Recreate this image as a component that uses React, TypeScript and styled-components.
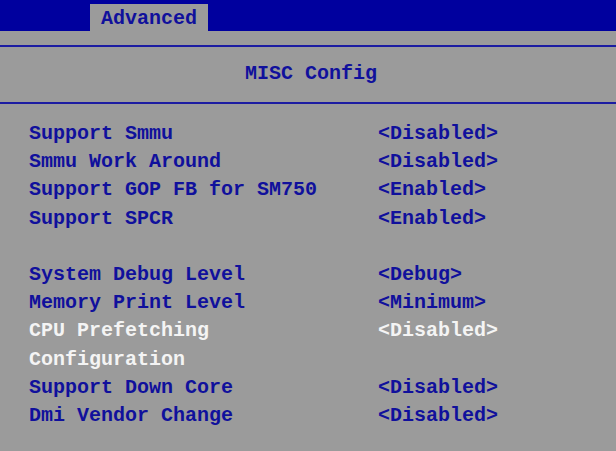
import styled, { createGlobalStyle } from 'styled-components';

const GlobalStyle = createGlobalStyle`
  html, body {
    margin: 0;
    padding: 0;
    background: #9b9b9b;
  }
  body {
    font-family: "Liberation Mono", "DejaVu Sans Mono", monospace;
    font-weight: bold;
    font-size: 20px;
  }
`;

const Screen = styled.div`
  width: 616px;
  height: 451px;
  overflow: hidden;
  background: #9b9b9b;
  display: flex;
  flex-direction: column;
`;

const TopBar = styled.header`
  height: 31px;
  background: #00009e;
  display: flex;
  align-items: flex-end;
  padding-left: 90px;
`;

const Tab = styled.div`
  height: 27px;
  width: 95px;
  padding: 0 12px 0 11px;
  background: #9b9b9b;
  color: #10109c;
  line-height: 29px;
`;

const TitleBar = styled.div`
  margin-top: 14px;
  height: 55px;
  border-top: 2px solid #1c1ca2;
  border-bottom: 2px solid #1c1ca2;
  text-align: center;
  padding-left: 6px;
  line-height: 53px;
  color: #10109c;
`;

const List = styled.div`
  padding: 16px 0 0 29px;
  display: flex;
  flex-direction: column;
`;

const Row = styled.div<{ selected?: boolean }>`
  display: grid;
  grid-template-columns: 349px auto;
  height: 28.2px;
  line-height: 28.2px;
  white-space: pre;
  color: ${props => (props.selected ? '#f4f4f4' : '#10109c')};
`;

const Spacer = styled.div`
  height: 28.2px;
`;

const Value = styled.span``;

type Item = { label: string; value?: string; selected?: boolean } | null;

const items: Item[] = [
  { label: 'Support Smmu', value: '<Disabled>' },
  { label: 'Smmu Work Around', value: '<Disabled>' },
  { label: 'Support GOP FB for SM750', value: '<Enabled>' },
  { label: 'Support SPCR', value: '<Enabled>' },
  null,
  { label: 'System Debug Level', value: '<Debug>' },
  { label: 'Memory Print Level', value: '<Minimum>' },
  { label: 'CPU Prefetching', value: '<Disabled>', selected: true },
  { label: 'Configuration', selected: true },
  { label: 'Support Down Core', value: '<Disabled>' },
  { label: 'Dmi Vendor Change', value: '<Disabled>' },
];

function App() {
  return (
    <Screen>
      <GlobalStyle />
      <TopBar>
        <Tab>Advanced</Tab>
      </TopBar>
      <TitleBar>MISC Config</TitleBar>
      <List>
        {items.map((item, i) =>
          item ? (
            <Row key={i} selected={item.selected}>
              <span>{item.label}</span>
              <Value>{item.value ?? ''}</Value>
            </Row>
          ) : (
            <Spacer key={i} />
          )
        )}
      </List>
    </Screen>
  );
}

export default App;
